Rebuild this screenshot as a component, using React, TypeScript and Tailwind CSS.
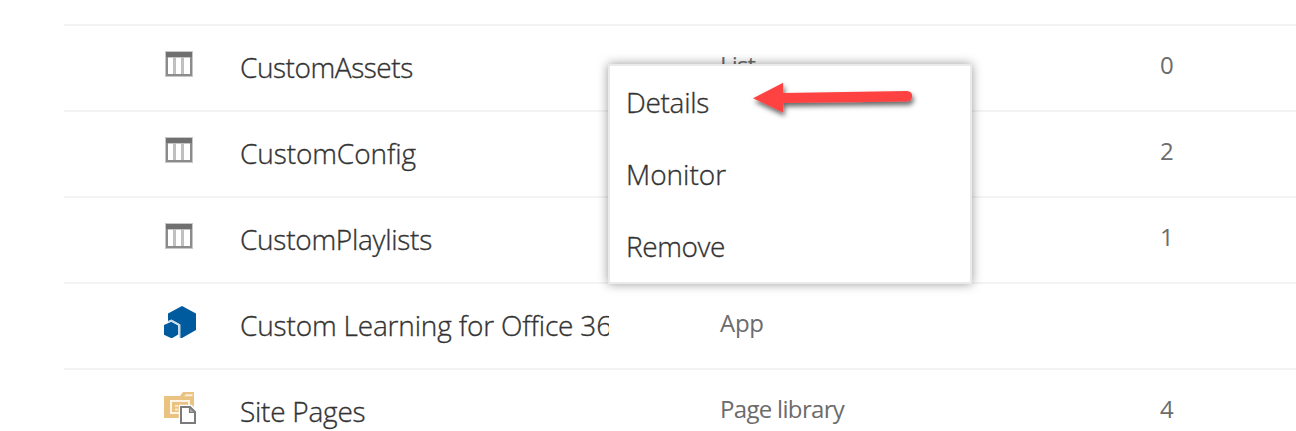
type IconKind = "list" | "app" | "pages";

type Entry = {
  name: string;
  kind: string;
  items: string;
  icon: IconKind;
  nameClass: string;
  kindClass: string;
};

const entries: Entry[] = [
  { name: "CustomAssets", kind: "List", items: "0", icon: "list", nameClass: "tracking-[-0.45px]", kindClass: "tracking-[-0.8px]" },
  { name: "CustomConfig", kind: "", items: "2", icon: "list", nameClass: "tracking-[-0.1px]", kindClass: "tracking-[0px]" },
  { name: "CustomPlaylists", kind: "", items: "1", icon: "list", nameClass: "tracking-[-0.27px]", kindClass: "tracking-[0px]" },
  { name: "Custom Learning for Office 365", kind: "App", items: "", icon: "app", nameClass: "tracking-[-0.17px]", kindClass: "tracking-[-0.3px]" },
  { name: "Site Pages", kind: "Page library", items: "4", icon: "pages", nameClass: "tracking-[-0.25px]", kindClass: "tracking-[-0.68px]" },
];

function ListIcon() {
  return (
    <svg width="32" height="32" viewBox="0 0 32 32" className="block">
      <rect x="1" y="3" width="28" height="26" fill="#c8c8c8" />
      <rect x="2" y="4" width="26" height="24" fill="#8c8c8c" />
      <rect x="2" y="4" width="26" height="5" fill="#707070" />
      <rect x="4" y="9.5" width="22" height="16.5" fill="#fff" />
      <rect x="9" y="9" width="3" height="17" fill="#c0c0c0" />
      <rect x="17" y="9" width="3" height="17" fill="#c0c0c0" />
    </svg>
  );
}

function AppIcon() {
  return (
    <svg width="32" height="32" viewBox="0 0 32 32" className="block">
      <path d="M18 0 32 7.5V24L18 32H4V7.5Z" fill="#005a9e" />
      <path d="M0 17.5 4 15 7.3 13.8 16 18.5V32H0Z" fill="#fff" />
      <path d="M7.3 15.7 14.2 19.6V28.6L8.3 32H6.8L0 28.8V19Z" fill="#005a9e" />
      <path d="M4 15.8 7.5 14.3 15.8 18.8V32" fill="none" stroke="#c3d8e8" strokeWidth="1.4" />
    </svg>
  );
}

function PagesIcon() {
  return (
    <svg width="32" height="32" viewBox="0 0 32 32" className="block">
      <path d="M0 4H16L19 0H30V26H0Z" fill="#eac282" />
      <path d="M17 4.2H20L22 2.2H28.5V4.2Z" fill="#fdf0dc" />
      <path d="M7 9H25V21H7Z" fill="none" stroke="#fff5e6" strokeWidth="2" />
      <path d="M11 13.8H14M16 13.8H22M11 17.5H14M16 17.5H18" stroke="#fbe9cd" strokeWidth="1.8" />
      <path d="M14.8 12.8H27.5L33 18V32H14.8Z" fill="#fff" />
      <path d="M17 15H26L31 20V31H17Z" fill="#fff" stroke="#7b7b7b" strokeWidth="2" />
      <path d="M25.5 15V20.5H31Z" fill="#aaa" stroke="#7b7b7b" strokeWidth="1.2" />
    </svg>
  );
}

const icons = { list: ListIcon, app: AppIcon, pages: PagesIcon };

function Row({ entry }: { entry: Entry }) {
  const Icon = icons[entry.icon];
  return (
    <div className="flex h-[86px] items-start border-t-2 border-[#f3f3f3] pl-[100px]">
      <div className="w-[76px] shrink-0 pt-[22px]">
        <Icon />
      </div>
      <div className={`w-[369px] shrink-0 overflow-hidden whitespace-nowrap pt-[21px] text-[28px] font-light leading-[40px] text-[#333] [-webkit-text-stroke:0.35px_#333] ${entry.nameClass}`}>
        {entry.name}
      </div>
      <div className={`ml-[111px] w-[440px] shrink-0 pt-[21px] text-[24px] leading-[36px] text-[#6c6c6c] ${entry.kindClass}`}>{entry.kind}</div>
      <div className="pt-[21px] text-[24px] leading-[36px] text-[#6c6c6c]">{entry.items}</div>
    </div>
  );
}

function ContextMenu() {
  return (
    <div className="absolute left-[608px] top-[64px] flex h-[220px] w-[364px] flex-col border-2 border-[#eaeaea] bg-white text-[28px] font-light leading-[72px] text-[#333] shadow-[0_0_10px_rgba(0,0,0,0.4)] [-webkit-text-stroke:0.35px_#333]">
      <div className="h-[72px] pl-4 tracking-[-0.3px]">Details</div>
      <div className="h-[72px] pl-4 tracking-[0px]">Monitor</div>
      <div className="h-[72px] pl-4 tracking-[-0.4px]">Remove</div>
    </div>
  );
}

function Arrow() {
  return (
    <svg className="absolute left-[740px] top-[72px] overflow-visible" width="190" height="56" viewBox="740 72 190 56">
      <defs>
        <filter id="arrow-shadow" x="-10%" y="-30%" width="120%" height="180%">
          <feDropShadow dx="1.5" dy="3.5" stdDeviation="2.4" floodColor="#000" floodOpacity="0.6" />
        </filter>
      </defs>
      <path
        d="M753 98.2 783.2 82.7V93L907 91Q912.2 91.2 912.2 96.2 912 101 907 101.4L783.2 103V112.5Z"
        fill="#fe4343"
        filter="url(#arrow-shadow)"
      />
    </svg>
  );
}

export default function App() {
  return (
    <div className="relative h-[431px] w-[1296px] overflow-hidden bg-white pl-16 pt-6 font-['Open_Sans','Noto_Sans',sans-serif]">
      {entries.map((entry) => (
        <Row key={entry.name} entry={entry} />
      ))}
      <ContextMenu />
      <Arrow />
    </div>
  );
}
